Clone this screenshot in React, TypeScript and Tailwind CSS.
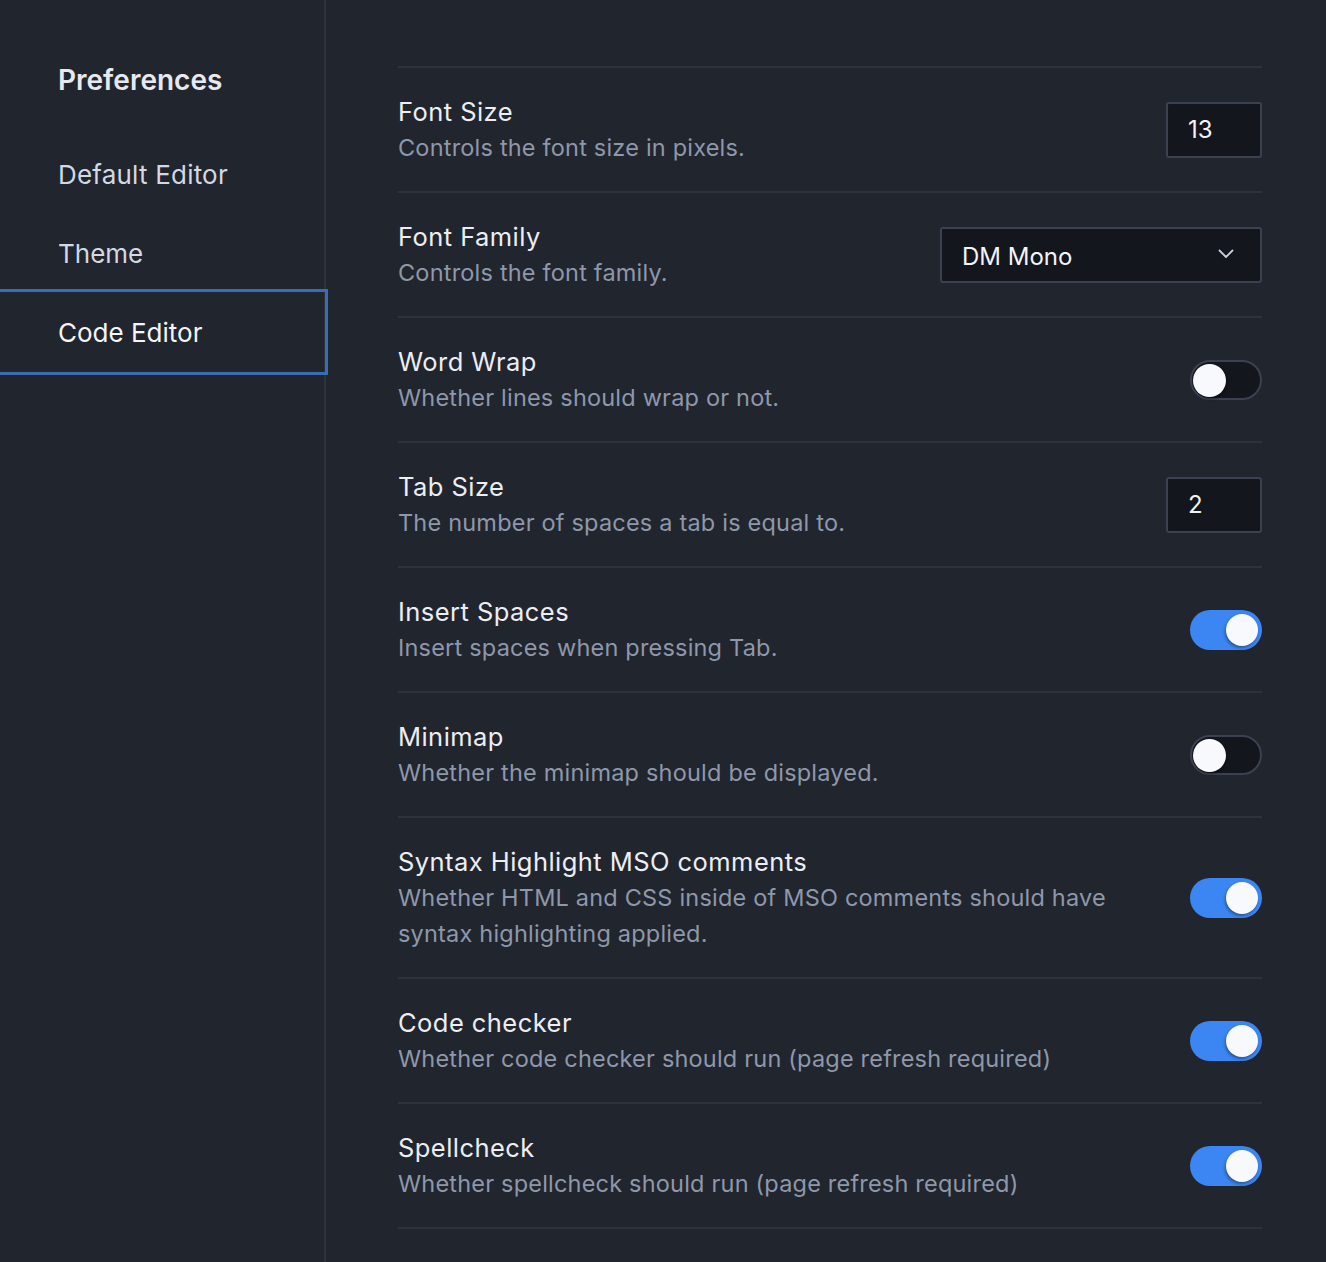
import React from "react";

type Row =
  | { title: string; desc: string; kind: "number"; value: string }
  | { title: string; desc: string; kind: "select"; value: string }
  | { title: string; desc: string; kind: "toggle"; on: boolean };

const rows: Row[] = [
  { title: "Font Size", desc: "Controls the font size in pixels.", kind: "number", value: "13" },
  { title: "Font Family", desc: "Controls the font family.", kind: "select", value: "DM Mono" },
  { title: "Word Wrap", desc: "Whether lines should wrap or not.", kind: "toggle", on: false },
  { title: "Tab Size", desc: "The number of spaces a tab is equal to.", kind: "number", value: "2" },
  { title: "Insert Spaces", desc: "Insert spaces when pressing Tab.", kind: "toggle", on: true },
  { title: "Minimap", desc: "Whether the minimap should be displayed.", kind: "toggle", on: false },
  {
    title: "Syntax Highlight MSO comments",
    desc: "Whether HTML and CSS inside of MSO comments should have syntax highlighting applied.",
    kind: "toggle",
    on: true,
  },
  { title: "Code checker", desc: "Whether code checker should run (page refresh required)", kind: "toggle", on: true },
  { title: "Spellcheck", desc: "Whether spellcheck should run (page refresh required)", kind: "toggle", on: true },
];

function Toggle({ on }: { on: boolean }) {
  if (on) {
    return (
      <div className="w-[72px] h-[40px] rounded-full bg-[#3b86f2] flex items-center justify-end pr-[4px] shrink-0">
        <div className="w-[32px] h-[32px] rounded-full bg-[#f8f9fc] shadow-[-1px_2px_3px_rgba(0,0,0,0.35)]" />
      </div>
    );
  }
  return (
    <div className="w-[72px] h-[40px] rounded-full bg-[#13161d] border-2 border-[#3b4150] flex items-center pl-[1px] shrink-0">
      <div className="w-[33px] h-[33px] rounded-full bg-[#f8f9fc] shadow-[1px_2px_3px_rgba(0,0,0,0.35)]" />
    </div>
  );
}

function Control({ row }: { row: Row }) {
  if (row.kind === "number") {
    return (
      <div className="w-[96px] h-[56px] rounded-[3px] bg-[#13161d] border-2 border-[#3b4150] flex items-center pl-[20px] text-[24px] text-[#f3f4f7] shrink-0">
        {row.value}
      </div>
    );
  }
  if (row.kind === "select") {
    return (
      <div className="w-[322px] h-[56px] rounded-[3px] bg-[#13161d] border-2 border-[#3b4150] flex items-center justify-between pl-[20px] pr-[26px] pt-[3px] text-[24px] text-[#f3f4f7] shrink-0">
        <span>{row.value}</span>
        <svg width="16" height="10" viewBox="0 0 16 10" fill="none" className="-mt-[6px]">
          <path d="M1.5 1.5 L8 8 L14.5 1.5" stroke="#c9ced8" strokeWidth="1.8" strokeLinecap="round" strokeLinejoin="round" />
        </svg>
      </div>
    );
  }
  return <Toggle on={row.on} />;
}

export default function App() {
  return (
    <div
      className="flex min-h-[1262px] w-[1326px] bg-[#21252e] antialiased"
      style={{ fontFamily: "Inter, 'Noto Sans', sans-serif" }}
    >
      <aside className="w-[326px] shrink-0 border-r-2 border-[#2d323d] pt-[40px]">
        <div className="h-[80px] flex items-center pl-[58px] text-[28px] font-semibold text-[#e6e9ef] mb-[14px]">
          Preferences
        </div>
        <nav className="flex flex-col">
          <div className="h-[80px] flex items-center pl-[58px] text-[26px] tracking-[0.2px] text-[#d3d8e2]">Default Editor</div>
          <div className="h-[78px] flex items-center pl-[58px] text-[26px] text-[#d3d8e2]">Theme</div>
          <div className="h-[80px] w-[325px] flex items-center pl-[58px] text-[26px] text-[#f3f5f8] outline-[3px] outline-solid outline-[#3a6cb4]">
            Code Editor
          </div>
        </nav>
      </aside>
      <main className="flex-1 pl-[72px] pr-[64px] pt-[66px]">
        <div className="border-t-2 border-[#2d323d]">
          {rows.map((row) => (
            <div
              key={row.title}
              className="flex items-center gap-[64px] border-b-2 border-[#2d323d] pt-[26px] pb-[25px]"
            >
              <div className="flex-1 min-w-0">
                <div className="text-[25.5px] leading-[36px] tracking-[0.45px] text-[#eceef3]">{row.title}</div>
                <div className="text-[23.5px] leading-[36px] text-[#8e98aa] tracking-[0.2px]">{row.desc}</div>
              </div>
              <Control row={row} />
            </div>
          ))}
        </div>
      </main>
    </div>
  );
}
